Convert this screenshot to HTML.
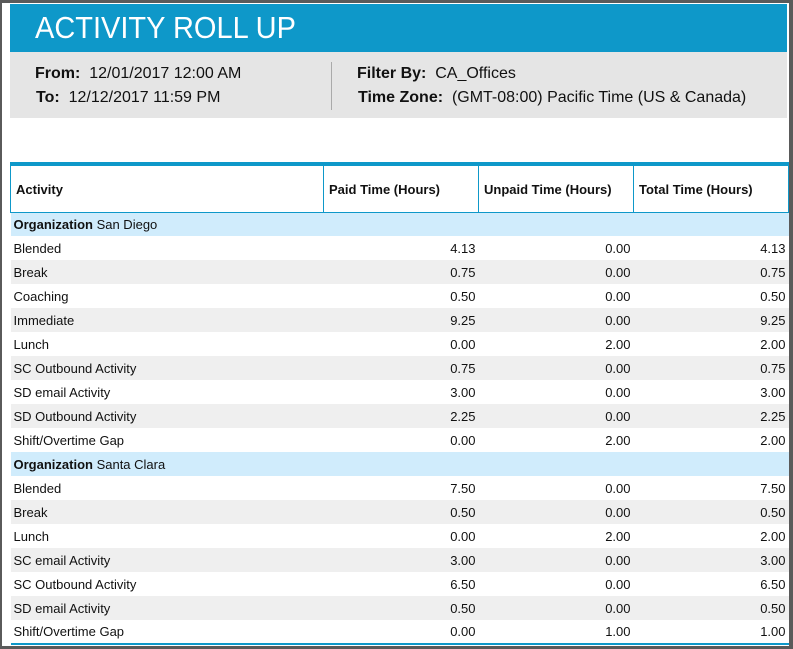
<!DOCTYPE html>
<html><head><style>
*{margin:0;padding:0;box-sizing:border-box}
body{width:793px;height:649px;overflow:hidden;background:#fff;font-family:"Liberation Sans",Arial,sans-serif;color:#111;position:relative}
.frame{position:absolute;left:0;top:0;width:793px;height:649px;border-top:3px solid #5a5a5a;border-left:2px solid #5a5a5a;border-right:4px solid #5a5a5a;border-bottom:3px solid #5a5a5a}
.hdr{position:absolute;left:10px;top:4px;width:777px;height:48px;background:#0e98c9}
.hdr span{position:absolute;left:25px;top:0;color:#fff;font-size:31px;line-height:48px;transform:scaleX(0.935);transform-origin:left center;white-space:nowrap}
.info{position:absolute;left:10px;top:52px;width:777px;height:66px;background:#e5e5e5;font-size:16px}
.info div{position:absolute;white-space:nowrap}
.sep{position:absolute;left:321px;top:10px;width:1px;height:48px;background:#aaa}
table{position:absolute;left:10px;top:162px;width:779px;border-collapse:collapse;font-size:13px;border-top:4px solid #0e98c9;border-bottom:2px solid #0e98c9}
th{height:48px;border:1px solid #0e98c9;text-align:left;padding-left:5px;font-size:13px;font-weight:bold;padding-top:2px}
td{height:24px;padding:0 3px;white-space:nowrap}
td.n{text-align:right}
tr.o td{background:#d0ecfc}
tr.g td{background:#efefef}
</style></head><body>
<div class="hdr"><span>ACTIVITY ROLL UP</span></div>
<div class="info">
<div style="left:25px;top:13px"><b>From:</b>&nbsp; 12/01/2017 12:00 AM</div>
<div style="left:26px;top:37px"><b>To:</b>&nbsp; 12/12/2017 11:59 PM</div>
<div class="sep"></div>
<div style="left:347px;top:13px"><b>Filter By:</b>&nbsp; CA_Offices</div>
<div style="left:348px;top:37px"><b>Time Zone:</b>&nbsp; (GMT-08:00) Pacific Time (US &amp; Canada)</div>
</div>
<table>
<tr><th style="width:313px">Activity</th><th style="width:155px">Paid Time (Hours)</th><th style="width:155px">Unpaid Time (Hours)</th><th>Total Time (Hours)</th></tr>
<tr class="o"><td colspan="4"><b>Organization</b> San Diego</td></tr>
<tr><td>Blended</td><td class="n">4.13</td><td class="n">0.00</td><td class="n">4.13</td></tr>
<tr class="g"><td>Break</td><td class="n">0.75</td><td class="n">0.00</td><td class="n">0.75</td></tr>
<tr><td>Coaching</td><td class="n">0.50</td><td class="n">0.00</td><td class="n">0.50</td></tr>
<tr class="g"><td>Immediate</td><td class="n">9.25</td><td class="n">0.00</td><td class="n">9.25</td></tr>
<tr><td>Lunch</td><td class="n">0.00</td><td class="n">2.00</td><td class="n">2.00</td></tr>
<tr class="g"><td>SC Outbound Activity</td><td class="n">0.75</td><td class="n">0.00</td><td class="n">0.75</td></tr>
<tr><td>SD email Activity</td><td class="n">3.00</td><td class="n">0.00</td><td class="n">3.00</td></tr>
<tr class="g"><td>SD Outbound Activity</td><td class="n">2.25</td><td class="n">0.00</td><td class="n">2.25</td></tr>
<tr><td>Shift/Overtime Gap</td><td class="n">0.00</td><td class="n">2.00</td><td class="n">2.00</td></tr>
<tr class="o"><td colspan="4"><b>Organization</b> Santa Clara</td></tr>
<tr><td>Blended</td><td class="n">7.50</td><td class="n">0.00</td><td class="n">7.50</td></tr>
<tr class="g"><td>Break</td><td class="n">0.50</td><td class="n">0.00</td><td class="n">0.50</td></tr>
<tr><td>Lunch</td><td class="n">0.00</td><td class="n">2.00</td><td class="n">2.00</td></tr>
<tr class="g"><td>SC email Activity</td><td class="n">3.00</td><td class="n">0.00</td><td class="n">3.00</td></tr>
<tr><td>SC Outbound Activity</td><td class="n">6.50</td><td class="n">0.00</td><td class="n">6.50</td></tr>
<tr class="g"><td>SD email Activity</td><td class="n">0.50</td><td class="n">0.00</td><td class="n">0.50</td></tr>
<tr><td>Shift/Overtime Gap</td><td class="n">0.00</td><td class="n">1.00</td><td class="n">1.00</td></tr>
</table>
<div class="frame"></div>
</body></html>
